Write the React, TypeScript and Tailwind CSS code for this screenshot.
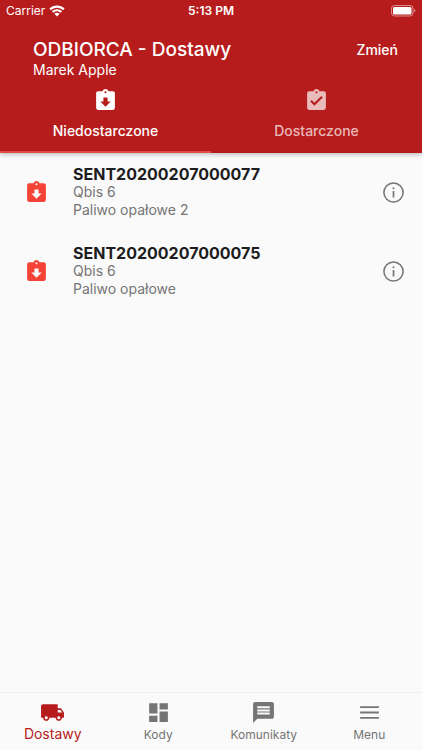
import { FC, useState } from "react";
import { IconType } from "react-icons";
import {
  MdAssignmentReturned,
  MdAssignmentTurnedIn,
  MdDashboard,
  MdLocalShipping,
  MdMessage,
} from "react-icons/md";

const deliveries = [
  { id: "SENT20200207000077", company: "Qbis 6", cargo: "Paliwo opałowe 2" },
  { id: "SENT20200207000075", company: "Qbis 6", cargo: "Paliwo opałowe" },
];

const MenuIcon: FC<{ className?: string }> = ({ className }) => (
  <svg viewBox="0 0 24 24" fill="currentColor" className={className} aria-hidden>
    <path d="M3 5.900h18v1.800H3zM3 11.100h18v1.800H3zM3 16.300h18v1.800H3z" />
  </svg>
);

const InfoIcon: FC<{ className?: string }> = ({ className }) => (
  <svg viewBox="0 0 24 24" className={className} aria-hidden>
    <circle cx="12" cy="12" r="9.200" fill="none" stroke="currentColor" strokeWidth="1.500" />
    <path d="M11.200 10.600h1.600v6.200h-1.600z" fill="currentColor" />
    <circle cx="12" cy="7.900" r="1" fill="currentColor" />
  </svg>
);

const tabs: { label: string; icon: IconType }[] = [
  { label: "Niedostarczone", icon: MdAssignmentReturned },
  { label: "Dostarczone", icon: MdAssignmentTurnedIn },
];

const navItems: { label: string; icon: IconType | typeof MenuIcon }[] = [
  { label: "Dostawy", icon: MdLocalShipping },
  { label: "Kody", icon: MdDashboard },
  { label: "Komunikaty", icon: MdMessage },
  { label: "Menu", icon: MenuIcon },
];

const StatusBar: FC = () => (
  <div className="grid h-[22px] grid-cols-3 items-center px-1.5 text-xs">
    <div className="flex items-center gap-1">
      <span>Carrier</span>
      <svg viewBox="0 0 16 12" fill="currentColor" className="h-3 w-4" aria-hidden>
        <path d="M8 .6C5 .6 2.300 1.700.4 3.600l1.500 1.600C3.500 3.600 5.600 2.700 8 2.700s4.500.9 6.100 2.500l1.500-1.600C13.700 1.700 11 .6 8 .6z" />
        <path d="M8 4.200c-2 0-3.800.8-5.100 2.100l1.500 1.500C5.300 6.900 6.600 6.300 8 6.300s2.700.6 3.600 1.500l1.500-1.500C11.800 5 10 4.200 8 4.200z" />
        <path d="M8 7.700c-1 0-1.900.4-2.600 1.100L8 11.500l2.600-2.700C9.900 8.100 9 7.700 8 7.700z" />
      </svg>
    </div>
    <span className="text-center font-semibold">5:13 PM</span>
    <svg viewBox="0 0 25 12" className="h-3 w-[25px] justify-self-end" aria-hidden>
      <rect x=".5" y=".5" width="21.500" height="10.500" rx="3" fill="none" stroke="white" strokeOpacity=".5" />
      <rect x="2" y="2" width="18.500" height="7.500" rx="1.500" fill="white" />
      <path d="M23.200 4v3.600c.7-.3 1.200-1 1.200-1.800s-.5-1.500-1.200-1.800z" fill="white" fillOpacity=".5" />
    </svg>
  </div>
);

const App: FC = () => {
  const [activeTab, setActiveTab] = useState(0);
  const [activeNav, setActiveNav] = useState(0);

  return (
    <div className="flex min-h-screen flex-col bg-[#fafafa] font-['Inter',sans-serif]">
      <header className="bg-[#b71c1c] text-white shadow-[0_2px_4px_rgba(0,0,0,0.22)]">
        <StatusBar />

        <div className="flex items-start justify-between pl-[33px] pr-6 pt-4">
          <div>
            <h1 className="text-[19px] font-medium leading-6">ODBIORCA - Dostawy</h1>
            <p className="text-sm leading-4">Marek Apple</p>
          </div>
          <button className="text-sm font-medium leading-6">Zmień</button>
        </div>

        <div className="grid grid-cols-2" role="tablist">
          {tabs.map(({ label, icon: Icon }, index) => (
            <button
              key={label}
              role="tab"
              aria-selected={activeTab === index}
              onClick={() => setActiveTab(index)}
              className={`flex flex-col items-center gap-2 border-b-2 py-2.5 text-sm font-medium ${
                activeTab === index ? "border-[#e04a46] text-white" : "border-transparent text-white/70"
              }`}
            >
              <Icon className="size-[25px]" />
              <span>{label}</span>
            </button>
          ))}
        </div>
      </header>

      <main className="flex-1">
        <ul className="flex flex-col gap-px">
          {deliveries.map((delivery) => (
            <li key={delivery.id} className="flex items-center py-3 pl-6 pr-4">
              <MdAssignmentReturned className="size-[25px] shrink-0 text-[#f44336]" />
              <div className="ml-6 flex-1 text-sm leading-[18px] text-[#757575]">
                <h2 className="text-base font-bold leading-[18px] text-[#1d1d1d]">{delivery.id}</h2>
                <p>{delivery.company}</p>
                <p>{delivery.cargo}</p>
              </div>
              <button aria-label={`Szczegóły ${delivery.id}`} className="text-[#757575]">
                <InfoIcon className="size-[25px]" />
              </button>
            </li>
          ))}
        </ul>
      </main>

      <nav className="grid h-[58px] grid-cols-4 border-t border-[#f0f0f0]">
        {navItems.map(({ label, icon: Icon }, index) => (
          <button
            key={label}
            onClick={() => setActiveNav(index)}
            className={`flex flex-col items-center pt-[7px] ${
              activeNav === index ? "text-sm leading-[18px] text-[#b71c1c]" : "text-xs leading-5 text-[#757575]"
            }`}
          >
            <Icon className="size-[25px] shrink-0" />
            <span>{label}</span>
          </button>
        ))}
      </nav>
    </div>
  );
};

export default App;
